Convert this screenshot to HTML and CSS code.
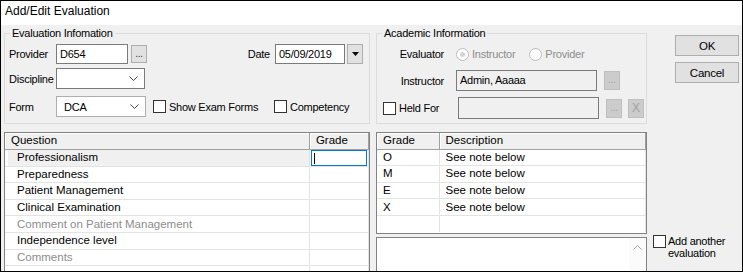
FILE: index.html
```html
<!DOCTYPE html>
<html lang="en">
<head>
<meta charset="UTF-8">
<title>Add/Edit Evaluation</title>
<link rel="stylesheet" href="styles.css">
</head>
<body>
  <div class="window">
    <div class="titlebar">Add/Edit Evaluation</div>
    <div class="dialog">

      <fieldset class="group eval-group">
        <legend>Evaluation Infomation</legend>
        <div class="row row-1">
          <span class="lbl">Provider</span>
          <span class="textbox provider-box">D654</span>
          <span class="btn dots">...</span>
          <span class="lbl date-lbl">Date</span>
          <span class="textbox date-box">05/09/2019</span>
          <span class="btn drop">
            <svg width="7" height="4" viewBox="0 0 7 4"><path d="M0 0h7L3.5 4z" fill="#000"/></svg>
          </span>
        </div>
        <div class="row row-2">
          <span class="lbl">Discipline</span>
          <span class="combo discipline-combo">
            <span class="combo-text"></span>
            <svg class="chev" width="9" height="5" viewBox="0 0 9 5"><path d="M0.5 0.5L4.5 4.5L8.5 0.5" fill="none" stroke="#444" stroke-width="1"/></svg>
          </span>
        </div>
        <div class="row row-3">
          <span class="lbl">Form</span>
          <span class="combo form-combo">
            <span class="combo-text">DCA</span>
            <svg class="chev" width="9" height="5" viewBox="0 0 9 5"><path d="M0.5 0.5L4.5 4.5L8.5 0.5" fill="none" stroke="#444" stroke-width="1"/></svg>
          </span>
          <span class="check exam-check"><span class="box"></span>Show Exam Forms</span>
          <span class="check"><span class="box"></span>Competency</span>
        </div>
      </fieldset>

      <fieldset class="group acad-group">
        <legend>Academic Information</legend>
        <div class="row row-1">
          <span class="lbl right">Evaluator</span>
          <span class="radio disabled"><span class="dot checked"></span>Instructor</span>
          <span class="radio disabled"><span class="dot"></span>Provider</span>
        </div>
        <div class="row row-2">
          <span class="lbl right">Instructor</span>
          <span class="textbox readonly wide-box">Admin, Aaaaa</span>
          <span class="btn dots disabled">...</span>
        </div>
        <div class="row row-3">
          <span class="check held-check"><span class="box"></span>Held For</span>
          <span class="textbox readonly wide-box"></span>
          <span class="btn dots disabled">...</span>
          <span class="btn dots disabled clear">X</span>
        </div>
      </fieldset>

      <div class="buttons">
        <span class="btn action">OK</span>
        <span class="btn action">Cancel</span>
      </div>

      <div class="grid question-grid">
        <table>
          <thead>
            <tr><th class="q-col">Question</th><th class="g-col">Grade</th></tr>
          </thead>
          <tbody>
            <tr class="current"><td>Professionalism</td><td class="edit-cell"><span class="cell-edit"><span class="caret"></span></span></td></tr>
            <tr><td>Preparedness</td><td></td></tr>
            <tr><td>Patient Management</td><td></td></tr>
            <tr><td>Clinical Examination</td><td></td></tr>
            <tr class="muted"><td>Comment on Patient Management</td><td></td></tr>
            <tr><td>Independence level</td><td></td></tr>
            <tr class="muted"><td>Comments</td><td></td></tr>
            <tr><td>&nbsp;</td><td></td></tr>
          </tbody>
        </table>
      </div>

      <div class="right-panel">
        <div class="grid grade-list">
          <table>
            <thead>
              <tr><th class="gl-grade">Grade</th><th class="gl-desc">Description</th></tr>
            </thead>
            <tbody>
              <tr><td>O</td><td>See note below</td></tr>
              <tr><td>M</td><td>See note below</td></tr>
              <tr><td>E</td><td>See note below</td></tr>
              <tr><td>X</td><td>See note below</td></tr>
              <tr class="empty"><td></td><td></td></tr>
            </tbody>
          </table>
        </div>
        <div class="memo">
          <div class="memo-scroll">
            <svg width="9" height="5" viewBox="0 0 9 5"><path d="M0.5 4.5L4.5 0.5L8.5 4.5" fill="none" stroke="#a0a0a0" stroke-width="1"/></svg>
          </div>
        </div>
      </div>

      <div class="another">
        <span class="check multi"><span class="box"></span><span>Add another<br>evaluation</span></span>
      </div>

    </div>
  </div>
</body>
</html>
```

FILE: styles.css
```css
* {
  box-sizing: border-box;
}
body {
  margin: 0;
  font-family: "Liberation Sans", Arial, sans-serif;
  font-size: 10.5px;
  letter-spacing: -0.25px;
  color: #000;
  background: #fff;
}
.window {
  width: 743px;
  height: 272px;
  border: 1px solid #000;
  background: #f0f0f0;
  overflow: hidden;
}
.titlebar {
  height: 24px;
  background: #fff;
  font-size: 12px;
  letter-spacing: 0;
  line-height: 21px;
  padding-left: 4px;
}
.dialog {
  display: grid;
  grid-template-columns: 366px 271px 1fr;
  grid-template-rows: 97px auto;
  column-gap: 6px;
  row-gap: 8px;
  padding: 2px 0 0 3px;
}

/* group boxes */
.group {
  margin: 0;
  padding: 0 6px 0 4px;
  border: 1px solid #dcdcdc;
  min-width: 0;
}
.group legend {
  margin-left: 1px;
  padding: 0 2px;
  line-height: 13px;
  font-size: 11px;
}
.row {
  display: flex;
  align-items: center;
}
.row-1 {
  height: 20px;
  margin-top: 4px;
}
.row-2 {
  height: 21px;
  margin-top: 4px;
}
.row-3 {
  height: 21px;
  margin-top: 7px;
}
.acad-group .row-2 {
  margin-top: 6px;
}
.acad-group .row-3 {
  margin-top: 6px;
  height: 22px;
}
.lbl {
  width: 47px;
  flex: none;
  font-size: 11px;
}
.lbl.right {
  width: 63px;
  text-align: right;
  margin-right: 12px;
}
.date-lbl {
  width: auto;
  margin-left: auto;
  margin-right: 5px;
}

/* inputs */
.textbox {
  height: 20px;
  border: 1px solid #7a7a7a;
  background: #fff;
  padding: 0 3px;
  line-height: 18px;
  font-size: 11px;
  flex: none;
}
.textbox.readonly {
  background: #f0f0f0;
}
.provider-box {
  width: 72px;
}
.date-box {
  width: 70px;
}
.wide-box {
  width: 141px;
  height: 21px;
  line-height: 19px;
}
.acad-group .row-3 .wide-box {
  height: 22px;
}
.combo {
  height: 21px;
  border: 1px solid #7a7a7a;
  background: #fff;
  display: flex;
  align-items: center;
  padding: 0 6px 0 4px;
  flex: none;
  font-size: 11px;
}
.combo-text {
  flex: 1;
}
.discipline-combo {
  width: 89px;
}
.form-combo {
  width: 90px;
  border-color: #adadad;
}
.form-combo .combo-text {
  padding-left: 3px;
}

/* buttons */
.btn {
  display: flex;
  align-items: center;
  justify-content: center;
  background: #e1e1e1;
  border: 1px solid #adadad;
  flex: none;
}
.dots {
  width: 16px;
  height: 18px;
  margin-left: 3px;
  padding-bottom: 2px;
  color: #333;
  font-size: 10px;
}
.dots.disabled {
  background: #ccc;
  border-color: #bfbfbf;
  color: #a0a0a0;
  margin-left: 7px;
  height: 19px;
}
.dots.clear {
  margin-left: 6px;
  font-size: 12px;
  padding: 0;
}
.drop {
  width: 16px;
  height: 20px;
  margin-left: 2px;
}
.buttons {
  display: flex;
  flex-direction: column;
  gap: 6px;
  padding: 8px 0 0 22px;
}
.action {
  width: 64px;
  height: 21px;
  font-size: 11.5px;
}

/* checkboxes and radios */
.check,
.radio {
  display: flex;
  align-items: center;
  flex: none;
  font-size: 11px;
}
.box {
  width: 13px;
  height: 13px;
  border: 1px solid #333;
  background: #fff;
  margin-right: 3px;
}
.exam-check {
  width: 121px;
  margin-left: 7px;
}
.held-check {
  width: 75px;
  margin-left: 2px;
}
.radio.disabled {
  color: #8d8d8d;
}
.dot {
  width: 13px;
  height: 13px;
  border-radius: 50%;
  border: 1px solid #bcbcbc;
  background: #fff;
  margin-right: 3px;
  position: relative;
}
.dot.checked::after {
  content: "";
  position: absolute;
  left: 3px;
  top: 3px;
  width: 5px;
  height: 5px;
  border-radius: 50%;
  background: #d5d5d5;
}
.radio + .radio {
  margin-left: 14px;
}

/* grids */
.grid {
  border: 1px solid #828282;
  background: #fff;
  font-family: "Liberation Sans Narrow", "Liberation Sans", sans-serif;
  font-size: 11.5px;
  letter-spacing: 0;
}
.grid table {
  width: 100%;
  border-collapse: collapse;
  table-layout: fixed;
}
.grid th {
  height: 16px;
  font-weight: normal;
  text-align: left;
  background: #f0f0f0;
  border-right: 1px solid #a0a0a0;
  border-bottom: 1px solid #a0a0a0;
  box-shadow: inset 1px 1px 0 #fff;
  padding: 0 6px;
  line-height: 15px;
}
.grid td {
  height: 16.67px;
  border-bottom: 1px solid #e3e3e3;
  border-right: 1px solid #e3e3e3;
  padding: 0 12px;
  white-space: nowrap;
  line-height: 15px;
}
.question-grid {
  height: 200px;
}
.q-col {
  width: 304px;
}
.g-col {
  width: 59px;
}
.current td:first-child {
  background: linear-gradient(to right, #fff 3px, #f0f0f0 3px);
}
.muted td {
  color: #8d8d8d;
}
.edit-cell {
  padding: 0 1px !important;
}
.cell-edit {
  display: block;
  height: 16px;
  border: 1px solid #0078d7;
  background: #fff;
  padding: 2px 0 0 2px;
}
.caret {
  display: block;
  width: 1px;
  height: 11px;
  background: #000;
}

.right-panel {
  display: flex;
  flex-direction: column;
  gap: 3px;
}
.grade-list {
  height: 102px;
}
.grade-list th {
  padding: 0 6px;
}
.grade-list td {
  padding: 0 6px;
}
.gl-grade {
  width: 62px;
}
.grade-list .empty td {
  height: 16px;
  border-bottom: none;
}
.memo {
  height: 40px;
  border: 1px solid #828282;
  background: #fff;
  display: flex;
  justify-content: flex-end;
}
.memo-scroll {
  width: 17px;
  background: #fbfbfb;
  display: flex;
  justify-content: center;
  padding-top: 7px;
}
.another {
  padding-top: 103px;
}
.multi {
  align-items: flex-start;
  line-height: 12px;
}
.multi .box {
  margin-top: 0;
  margin-right: 2px;
}
```
